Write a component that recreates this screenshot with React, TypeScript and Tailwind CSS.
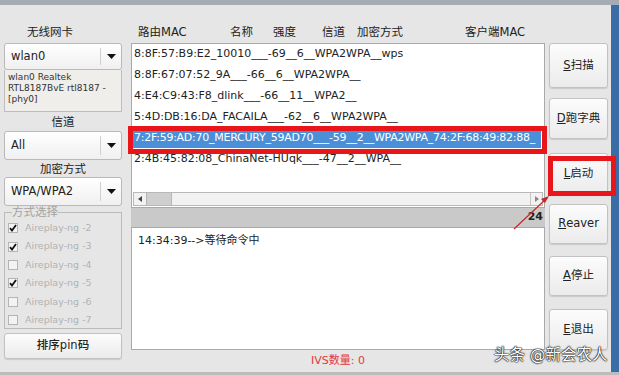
import React from "react";

const rows = [
  "8:8F:57:B9:E2_10010___-69__6__WPA2WPA__wps",
  "8:8F:67:07:52_9A___-66__6__WPA2WPA__",
  "4:E4:C9:43:F8_dlink___-66__11__WPA2__",
  "5:4D:DB:16:DA_FACAILA___-62__6__WPA2WPA__",
  "7:2F:59:AD:70_MERCURY_59AD70___-59__2__WPA2WPA_74:2F:68:49:82:88_",
  "2:4B:45:82:08_ChinaNet-HUqk___-47__2__WPA__",
];

const modes = [
  { n: 2, on: true },
  { n: 3, on: true },
  { n: 4, on: false },
  { n: 5, on: true },
  { n: 6, on: false },
  { n: 7, on: false },
];

function Combo({ value, className = "" }: { value: string; className?: string }) {
  return (
    <div
      className={`flex items-stretch rounded-[3px] border border-[#b9b9b9] bg-linear-to-b from-white to-[#f0f0f0] ${className}`}
    >
      <div className="flex flex-1 items-center pl-[6px] text-[11.5px] text-[#222]">{value}</div>
      <div className="my-[4px] w-px bg-[#d0d0d0]" />
      <div className="flex w-[20px] items-center justify-center">
        <svg width="9" height="5" viewBox="0 0 9 5">
          <path d="M0 0h9L4.5 5z" fill="#111" />
        </svg>
      </div>
    </div>
  );
}

function Btn({ k, label, className = "" }: { k?: string; label: string; className?: string }) {
  return (
    <div
      className={`flex items-center justify-center rounded-[3px] border border-[#c2c2c2] bg-linear-to-b from-[#fcfcfc] to-[#ebebeb] text-[11.5px] text-[#222] shadow-[0_1px_1px_rgba(0,0,0,0.12)] ${className}`}
    >
      {k && <span className="underline">{k}</span>}
      {label}
    </div>
  );
}

export default function App() {
  return (
    <div className="relative flex h-[375px] w-[619px] flex-col overflow-hidden bg-[#e6e6e6] font-['DejaVu_Sans','Noto_Sans_CJK_SC',sans-serif]">
      <div className="h-[5px] bg-[#a5acb4]" />
      <div className="flex min-h-0 flex-1">
        <div className="flex flex-1 flex-col">
          {/* header */}
          <div className="flex h-[38px] items-end pb-[4px] pl-[27px] text-[11.5px] leading-[14px] text-[#222]">
            <span className="w-[111px]">无线网卡</span>
            <span className="w-[92px]">路由MAC</span>
            <span className="w-[43px]">名称</span>
            <span className="w-[49px]">强度</span>
            <span className="w-[35px]">信道</span>
            <span className="w-[108px]">加密方式</span>
            <span>客户端MAC</span>
          </div>

          <div className="flex flex-1 pl-[4px]">
            {/* left column */}
            <div className="flex w-[118px] flex-col">
              <Combo value="wlan0" className="h-[27px]" />
              <div className="h-[42px] border border-t-0 border-[#bdbdbd] bg-[#f0eeea] px-[3px] pt-[2px] text-[9px] leading-[11px] whitespace-nowrap text-[#333]">
                wlan0 Realtek
                <br />
                RTL8187BvE rtl8187 -
                <br />
                [phy0]
              </div>
              <div className="flex h-[19px] items-end justify-center pb-[2px] text-[11.5px] leading-[14px] text-[#222]">
                信道
              </div>
              <Combo value="All" className="h-[29px]" />
              <div className="flex h-[17px] items-center justify-center text-[11.5px] leading-[14px] text-[#222]">
                加密方式
              </div>
              <Combo value="WPA/WPA2" className="h-[29px]" />
              <fieldset className="h-[123px] border border-[#bababa] pl-[3px]">
                <legend className="ml-[4px] text-[11.5px] leading-[13px] text-[#a2a2a2]">方式选择</legend>
                <div className="flex flex-col">
                  {modes.map((m) => (
                    <div key={m.n} className="flex h-[18.4px] items-center gap-[7px]">
                      <div className="flex h-[10px] w-[10px] items-center justify-center border border-[#b4b4b4] bg-[#f3f3f3]">
                        {m.on && (
                          <svg width="8" height="8" viewBox="0 0 8 8">
                            <path d="M1 4.2l2 2.3L7 1" stroke="#111" strokeWidth="1.8" fill="none" />
                          </svg>
                        )}
                      </div>
                      <span className="text-[9.5px] text-[#b2b2b2]">Aireplay-ng -{m.n}</span>
                    </div>
                  ))}
                </div>
              </fieldset>
              <Btn label="排序pin码" className="mt-[4px] h-[26px] font-medium" />
            </div>

            {/* center column */}
            <div className="ml-[9px] flex w-[414px] flex-col">
              <div className="flex h-[165px] flex-col border border-[#a9a9a9] bg-white">
                <div className="min-h-0 flex-1 overflow-hidden pl-[1px]">
                  {rows.map((r, i) => (
                    <div key={i} className="flex h-[21px] items-center whitespace-nowrap text-[11px] text-[#222]">
                      <span
                        className={
                          i === 4
                            ? "flex h-[18px] w-[408px] items-center overflow-hidden bg-[#4b8fd8] px-[1px] tracking-[-0.25px] text-white"
                            : "px-[1px]"
                        }
                      >
                        {r}
                      </span>
                    </div>
                  ))}
                </div>
                <div className="mx-[1px] mb-[1px] flex h-[14px] shrink-0 border border-[#b8b8b8] bg-[#f2f2f2]">
                  <div className="flex w-[12px] items-center justify-center">
                    <svg width="4" height="6" viewBox="0 0 4 6">
                      <path d="M4 0v6L0 3z" fill="#444" />
                    </svg>
                  </div>
                  <div className="w-[26px] border-x border-[#b5b5b5] bg-[#cfcfcf]" />
                  <div className="flex-1" />
                  <div className="flex w-[12px] items-center justify-center border-l border-[#c4c4c4]">
                    <svg width="4" height="6" viewBox="0 0 4 6">
                      <path d="M0 0v6L4 3z" fill="#888" />
                    </svg>
                  </div>
                </div>
              </div>
              <div className="flex h-[19px] items-center justify-end bg-[#c9c9c9] pr-[2px] text-[11px] font-bold text-[#222]">
                24
              </div>
              <div className="h-[123px] border border-[#a9a9a9] bg-white pl-[6px] pt-[6px] text-[11px] leading-[14px] text-[#222]">
                14:34:39--&gt;等待命令中
              </div>
              <div className="flex flex-1 items-center justify-center text-[11px] text-[#e33a3a]">IVS数量: 0</div>
            </div>

            {/* right column */}
            <div className="ml-[4px] flex w-[59px] flex-col">
              <Btn k="S" label="扫描" className="h-[45px]" />
              <Btn k="D" label="跑字典" className="mt-[10px] h-[41px]" />
              <Btn k="L" label="启动" className="mt-[14px] h-[42px]" />
              <Btn k="R" label="eaver" className="mt-[9px] h-[40px]" />
              <Btn k="A" label="停止" className="mt-[12px] h-[40px]" />
              <Btn k="E" label="退出" className="mt-[13px] h-[41px]" />
            </div>
          </div>
        </div>
        <div className="w-[8px] bg-[#3a6da6]" />
      </div>
      <div className="h-[3px] bg-[#bcbcbc]" />

      {/* annotations */}
      <div className="absolute left-[128px] top-[126px] h-[28px] w-[419px] border-[5px] border-[#e8161b]" />
      <div className="absolute left-[548px] top-[156px] h-[40px] w-[68px] border-[5px] border-[#e8161b]" />
      <svg className="absolute left-[508px] top-[192px]" width="44" height="42" viewBox="0 0 44 42">
        <path d="M6 37L39 6" stroke="#c62828" strokeWidth="1.2" fill="none" />
        <path d="M41 4l-8 3 4 4z" fill="#c62828" />
      </svg>
      <div className="absolute left-[494px] top-[345px] text-[15.5px] leading-[20px] whitespace-nowrap text-white [text-shadow:0_0_2px_#000,0_0_1px_#000,0_0_1px_#000]">
        头条 @新会农人
      </div>
    </div>
  );
}
